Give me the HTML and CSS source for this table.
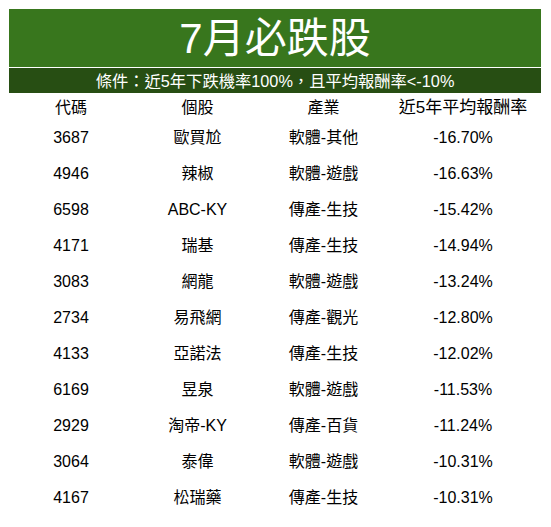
FILE: index.html
```html
<!DOCTYPE html>
<html lang="zh-Hant">
<head>
<meta charset="utf-8">
<title>7月必跌股</title>
<link rel="stylesheet" href="styles.css">
</head>
<body>
<div class="sheet">
  <div class="title">7月必跌股</div>
  <div class="cond">條件：近5年下跌機率100%，且平均報酬率&lt;-10%</div>
  <div class="table">
    <div class="hd">代碼</div><div class="hd">個股</div><div class="hd">產業</div><div class="hd big">近5年平均報酬率</div>
    <div>3687</div><div>歐買尬</div><div>軟體-其他</div><div>-16.70%</div>
    <div>4946</div><div>辣椒</div><div>軟體-遊戲</div><div>-16.63%</div>
    <div>6598</div><div>ABC-KY</div><div>傳產-生技</div><div>-15.42%</div>
    <div>4171</div><div>瑞基</div><div>傳產-生技</div><div>-14.94%</div>
    <div>3083</div><div>網龍</div><div>軟體-遊戲</div><div>-13.24%</div>
    <div>2734</div><div>易飛網</div><div>傳產-觀光</div><div>-12.80%</div>
    <div>4133</div><div>亞諾法</div><div>傳產-生技</div><div>-12.02%</div>
    <div>6169</div><div>昱泉</div><div>軟體-遊戲</div><div>-11.53%</div>
    <div>2929</div><div>淘帝-KY</div><div>傳產-百貨</div><div>-11.24%</div>
    <div>3064</div><div>泰偉</div><div>軟體-遊戲</div><div>-10.31%</div>
    <div>4167</div><div>松瑞藥</div><div>傳產-生技</div><div>-10.31%</div>
  </div>
</div>
</body>
</html>
```

FILE: styles.css
```css
html, body {
  margin: 0;
  padding: 0;
  background: #ffffff;
}
body {
  font-family: "Liberation Sans", "Noto Sans CJK TC", sans-serif;
  color: #000000;
}
.sheet {
  padding: 9px 10px 0 9px;
  width: 532px;
}
.title {
  height: 58px;
  background: #38761d;
  color: #ffffff;
  font-size: 42px;
  line-height: 60px;
  text-align: center;
}
.cond {
  margin-top: 1px;
  height: 25px;
  background: #274e13;
  color: #ffffff;
  font-size: 16.3px;
  line-height: 26px;
  text-align: center;
}
.table {
  display: grid;
  grid-template-columns: 124px 129px 123px 156px;
  grid-template-rows: 27px;
  grid-auto-rows: 36px;
  font-size: 16px;
  line-height: 36px;
  text-align: center;
}
.table .hd {
  height: 24px;
  line-height: 24px;
  padding-top: 3px;
}
.table .big {
  font-size: 17px;
}
```
